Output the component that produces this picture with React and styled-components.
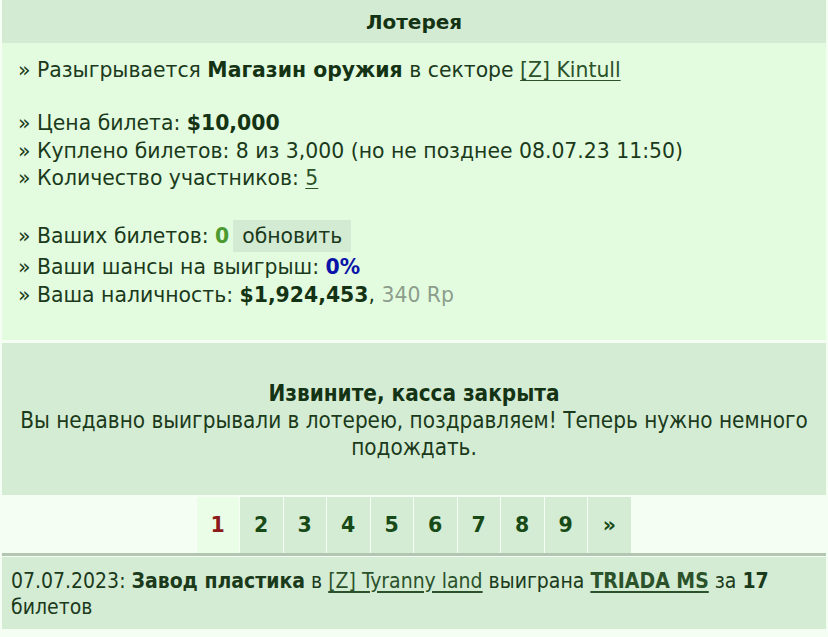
import styled, { createGlobalStyle } from "styled-components";

const GlobalStyle = createGlobalStyle`
  body {
    margin: 0;
    background: #f4fef2;
    font-family: "DejaVu Sans", Verdana, sans-serif;
    color: #1b3a1b;
  }
`;

const Page = styled.div`
  width: 824px;
  margin: 0 2px;
`;

const Header = styled.div`
  height: 43px;
  background: #d4ebd3;
  display: flex;
  align-items: center;
  justify-content: center;
  font-size: 20px;
  font-weight: bold;
  color: #143314;
`;

const Info = styled.div`
  background: #e3fcdf;
  padding: 14px 16px 31px;
  font-size: 20.4px;
  line-height: 27.5px;
`;

const Line = styled.div`
  margin-top: ${(p) => p.gap || 0}px;
  margin-bottom: ${(p) => (p.tall ? "2px" : "0")};
  white-space: nowrap;
`;

const B = styled.b`
  color: ${(p) => p.color || "#143314"};
`;

const Link = styled.a`
  color: #2b522b;
  text-decoration: underline;
  text-underline-offset: 3px;
  text-decoration-thickness: 1px;
`;

const Muted = styled.span`
  color: #8c9d8c;
`;

const Refresh = styled.span`
  display: inline-block;
  background: #d4ebd3;
  padding: 2px 9px;
  margin-left: 4px;
  line-height: 28px;
`;

const Closed = styled.div`
  margin-top: 3px;
  background: #d4ecd3;
  height: 152px;
  display: flex;
  flex-direction: column;
  justify-content: center;
  align-items: center;
  text-align: center;
  font-stretch: condensed;
  font-size: 22.3px;
  line-height: 27px;
  padding: 2px 10px 0;
  box-sizing: border-box;
`;

const ClosedTitle = styled.div`
  font-weight: bold;
  color: #143314;
`;

const Pager = styled.div`
  display: flex;
  justify-content: center;
  padding: 2px 0 0;
  background: #f4fef2;
  border-bottom: 3px solid #b3c6b2;
`;

const PageCell = styled.div`
  width: 42.5px;
  height: 56px;
  margin-right: 1px;
  display: flex;
  align-items: center;
  justify-content: center;
  background: ${(p) => (p.active ? "#eafde6" : "#d4ecd3")};
  color: ${(p) => (p.active ? "#8c1c1c" : "#174a17")};
  font-size: 20.5px;
  font-weight: bold;
`;

const News = styled.div`
  margin-top: 1px;
  background: #d4ecd3;
  padding: 11px 9px 9px;
  font-stretch: condensed;
  font-size: 21px;
  line-height: 26px;
`;

const NewsLink = styled.a`
  color: #2b522b;
  text-decoration: underline;
  text-underline-offset: 3px;
  font-weight: ${(p) => (p.bold ? "bold" : "normal")};
`;

const pages = ["1", "2", "3", "4", "5", "6", "7", "8", "9", "»"];

export default function App() {
  return (
    <Page>
      <GlobalStyle />
      <Header>Лотерея</Header>
      <Info>
        <Line>
          » Разыгрывается <B>Магазин оружия</B> в секторе <Link>[Z] Kintull</Link>
        </Line>
        <Line gap={25.5}>
          » Цена билета: <B>$10,000</B>
        </Line>
        <Line>» Куплено билетов: 8 из 3,000 (но не позднее 08.07.23 11:50)</Line>
        <Line>
          » Количество участников: <Link>5</Link>
        </Line>
        <Line gap={27.5} tall>
          » Ваших билетов: <B color="#4c9a30">0</B>
          <Refresh>обновить</Refresh>
        </Line>
        <Line>
          » Ваши шансы на выигрыш: <B color="#0a14a8">0%</B>
        </Line>
        <Line>
          » Ваша наличность: <B>$1,924,453</B>, <Muted>340 Rp</Muted>
        </Line>
      </Info>
      <Closed>
        <ClosedTitle>Извините, касса закрыта</ClosedTitle>
        <div>
          Вы недавно выигрывали в лотерею, поздравляем! Теперь нужно немного
          подождать.
        </div>
      </Closed>
      <Pager>
        {pages.map((p) => (
          <PageCell key={p} active={p === "1"}>
            {p}
          </PageCell>
        ))}
      </Pager>
      <News>
        07.07.2023: <b>Завод пластика</b> в <NewsLink>[Z] Tyranny land</NewsLink>{" "}
        выиграна <NewsLink bold>TRIADA MS</NewsLink> за <b>17</b> билетов
      </News>
    </Page>
  );
}
